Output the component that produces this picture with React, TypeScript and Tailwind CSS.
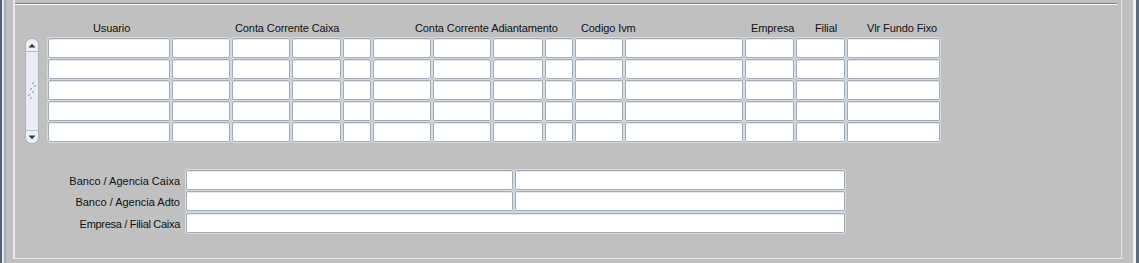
import React from "react";

const cols = [
  "w-[122px]",
  "w-[58px]",
  "w-[58px]",
  "w-[49px]",
  "w-[28px]",
  "w-[58px]",
  "w-[58px]",
  "w-[50px]",
  "w-[28px]",
  "w-[48px]",
  "w-[118px]",
  "w-[49px]",
  "w-[49px]",
  "w-[93px]",
];

const fieldCls =
  "h-[20px] bg-white border border-[#a2abb8] rounded-[2px] shadow-[inset_0_1px_0_#e4e9ef,0_0_0_1px_#d3dbe5]";

function ScrollBar() {
  return (
    <div className="w-[14px] h-[106px] rounded-[7px] bg-[#e9edf3] border border-[#aab5c3] flex flex-col items-center justify-between overflow-hidden">
      <div className="w-full h-[13px] border-b border-[#b5bfcc] flex items-center justify-center bg-[#eef1f6]">
        <svg width="8" height="5" viewBox="0 0 8 5">
          <path d="M0.5 4.5 L4 0.8 L7.5 4.5 Z" fill="#2f3947" />
        </svg>
      </div>
      <svg width="10" height="20" viewBox="0 0 10 20">
        <path d="M7 1 L5 3 M9 4 L7 6 M5 7 L3 9 M7 10 L5 12 M3 13 L1 15 M5 16 L3 18" stroke="#8a95a3" strokeWidth="1" />
      </svg>
      <div className="w-full h-[13px] border-t border-[#b5bfcc] flex items-center justify-center bg-[#eef1f6]">
        <svg width="8" height="5" viewBox="0 0 8 5">
          <path d="M0.5 0.5 L4 4.2 L7.5 0.5 Z" fill="#2f3947" />
        </svg>
      </div>
    </div>
  );
}

export default function App() {
  const rows = [0, 1, 2, 3, 4];
  return (
    <div className="w-[1139px] h-[263px] bg-[#c0c0c0] flex font-['Liberation_Sans',Arial,sans-serif] text-[11px] leading-[13px] text-[#111] overflow-hidden">
      <div className="w-[2px] h-full bg-[#56626e]" />
      <div className="w-[2px] h-full bg-[#e3e9f0]" />
      <div className="w-[2px] h-full bg-[#a4b0be]" />
      <div className="w-[7px] h-full" />
      {/* inner panel */}
      <div className="w-[1109px] h-[259px] border-l-2 border-r border-b border-[#e2e9f2] flex flex-col">
        <div className="mt-[3px] mr-[4px] h-[2px] border-t border-[#7e7e7e] border-b border-b-[#fbfbfb]" />
        {/* headers */}
        <div className="mt-[17px] pl-[33px] flex whitespace-nowrap h-[13px] tracking-[-0.1px]">
          <div className="w-[124px] pl-[45px]">Usuario</div>
          <div className="w-[201px] pl-[63px]">Conta Corrente Caixa</div>
          <div className="w-[202px] pl-[42px]">Conta Corrente Adiantamento</div>
          <div className="w-[170px] pl-[6px]">Codigo Ivm</div>
          <div className="w-[51px] pl-[6px]">Empresa</div>
          <div className="w-[51px] pl-[19px]">Filial</div>
          <div className="w-[93px] pl-[20px]">Vlr Fundo Fixo</div>
        </div>
        {/* grid */}
        <div className="mt-[3px] pl-[10px] flex items-start">
          <ScrollBar />
          <div className="ml-[9px] flex flex-col gap-[1px]">
            {rows.map((r) => (
              <div key={r} className="flex gap-[2px]">
                {cols.map((c, i) => (
                  <div key={i} className={`${fieldCls} ${c}`} />
                ))}
              </div>
            ))}
          </div>
        </div>
        {/* bottom form */}
        <div className="mt-[26px] flex flex-col">
          <div className="flex items-center">
            <div className="w-[166px] text-right pr-[1px] pt-[2px] whitespace-nowrap">Banco / Agencia Caixa</div>
            <div className="ml-[5px] flex gap-[2px]">
              <div className={`${fieldCls} w-[327px]`} />
              <div className={`${fieldCls} w-[330px]`} />
            </div>
          </div>
          <div className="mt-[1px] flex items-center">
            <div className="w-[166px] text-right pr-[1px] pt-[2px] whitespace-nowrap">Banco / Agencia Adto</div>
            <div className="ml-[5px] flex gap-[2px]">
              <div className={`${fieldCls} w-[327px]`} />
              <div className={`${fieldCls} w-[330px]`} />
            </div>
          </div>
          <div className="mt-[2px] flex items-center">
            <div className="w-[166px] text-right pr-[1px] pt-[2px] whitespace-nowrap tracking-[-0.3px]">Empresa / Filial Caixa</div>
            <div className="ml-[5px] flex">
              <div className={`${fieldCls} w-[659px]`} />
            </div>
          </div>
        </div>
      </div>
      <div className="w-[11px] h-full" />
      <div className="w-[3px] h-full bg-[#eef2f7]" />
      <div className="w-[3px] h-full bg-[#5e6a77]" />
    </div>
  );
}
